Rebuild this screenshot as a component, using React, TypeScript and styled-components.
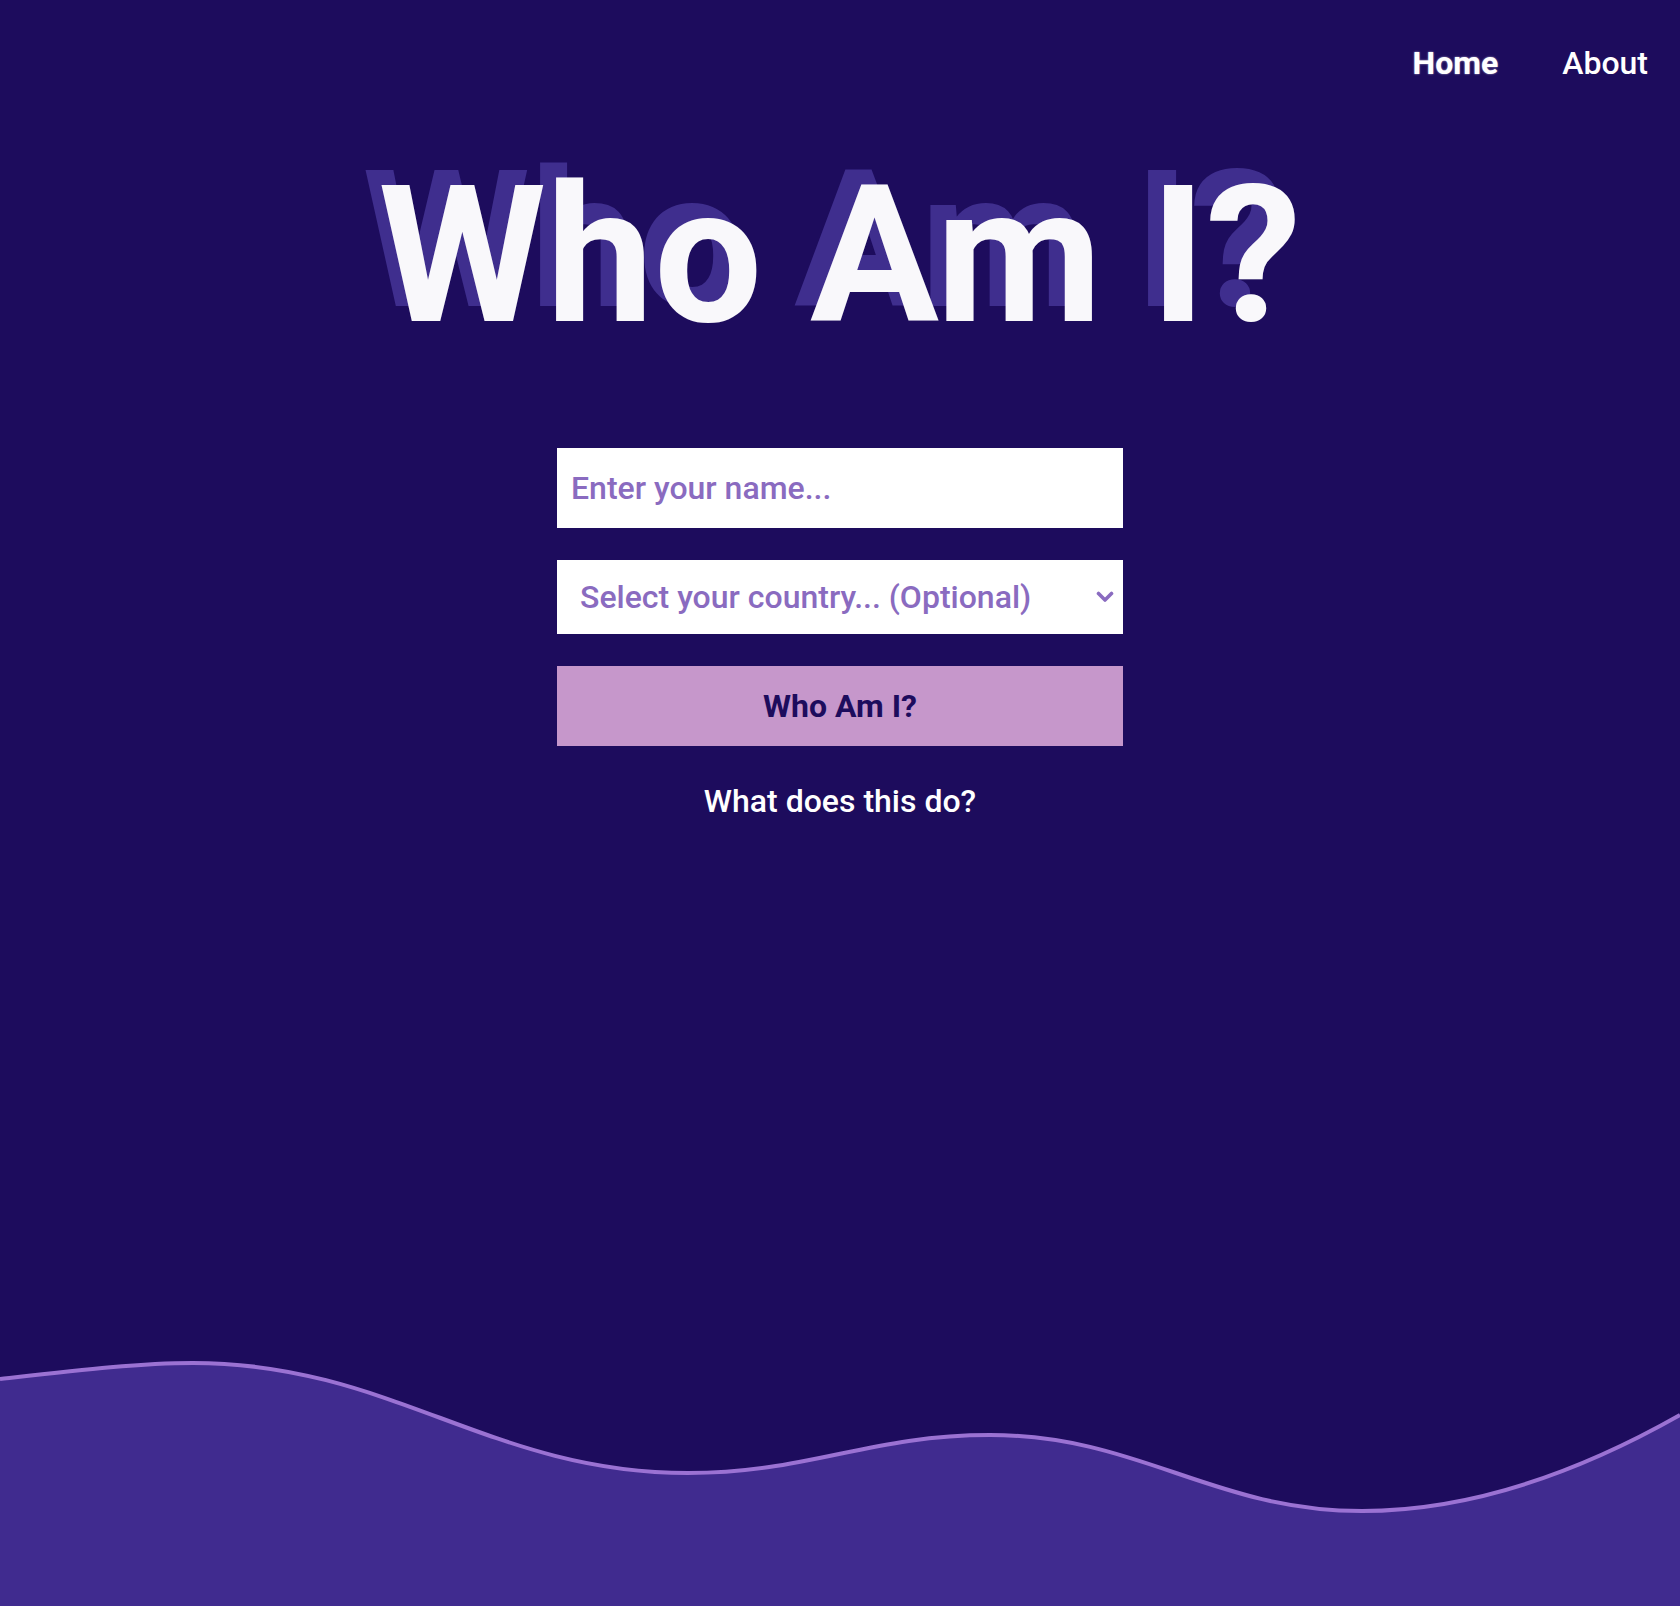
import React, { useState } from 'react';
import styled, { createGlobalStyle } from 'styled-components';

const GlobalStyle = createGlobalStyle`
    * {
        box-sizing: border-box;
    }
    body {
        margin: 0;
        background-color: #1d0c5d;
        font-family: Roboto, "Liberation Sans", Arial, sans-serif;
    }
`

const countries = ['Ireland', 'United Kingdom', 'United States', 'Canada', 'Australia', 'Germany', 'France'];

const App: React.FC = () => {
    const [name, setName] = useState('');
    const [country, setCountry] = useState('');

    return (
        <>
            <GlobalStyle />
            <Page>
                <Nav>
                    <NavLink href="#" active>Home</NavLink>
                    <NavLink href="#">About</NavLink>
                </Nav>
                <Main>
                    <Title>Who Am I?</Title>
                    <Form onSubmit={(e) => e.preventDefault()}>
                        <NameInput
                            type="text"
                            placeholder="Enter your name..."
                            value={name}
                            onChange={(e) => setName(e.target.value)}
                        />
                        <SelectWrap>
                            <CountrySelect value={country} onChange={(e) => setCountry(e.target.value)}>
                                <option value="">Select your country... (Optional)</option>
                                {countries.map((c) => (
                                    <option key={c} value={c}>{c}</option>
                                ))}
                            </CountrySelect>
                            <Chevron width="18" height="12" viewBox="0 0 18 12">
                                <polyline points="2.5,2.5 9,9 15.5,2.5" fill="none" stroke="#8a6bc0" strokeWidth="3.6" strokeLinecap="round" strokeLinejoin="round" />
                            </Chevron>
                        </SelectWrap>
                        <SubmitButton type="submit">Who Am I?</SubmitButton>
                    </Form>
                    <HelpLink href="#">What does this do?</HelpLink>
                </Main>
                <Wave viewBox="0 0 1680 250" preserveAspectRatio="none">
                    <path
                        d="M0,23 C80,14 140,7 193,7 C391,7 490,117 688,117 C809,117 869,79 990,79 C1139,79 1213,155 1362,155 C1480,155 1590,110 1680,59 L1680,250 L0,250 Z"
                        fill="#402b8f"
                    />
                    <path
                        d="M0,23 C80,14 140,7 193,7 C391,7 490,117 688,117 C809,117 869,79 990,79 C1139,79 1213,155 1362,155 C1480,155 1590,110 1680,59"
                        fill="none"
                        stroke="#9b72d3"
                        strokeWidth="4"
                    />
                </Wave>
            </Page>
        </>
    );
};

export default App;

const Page = styled.div`
    min-height: 100vh;
    display: flex;
    flex-direction: column;
    background-color: #1d0c5d;
`
const Nav = styled.nav`
    display: flex;
    justify-content: flex-end;
    gap: 64px;
    height: 80px;
    padding: 44px 32px 0 0;
`
const NavLink = styled.a<{ active?: boolean }>`
    color: #ffffff;
    text-decoration: none;
    font-size: 32px;
    line-height: normal;
    font-weight: ${(p) => (p.active ? 700 : 500)};
    text-shadow: ${(p) => (p.active ? '0 0 2px rgba(255, 255, 255, 0.7)' : 'none')};
`
const Main = styled.main`
    flex: 1;
    display: flex;
    flex-direction: column;
    align-items: center;
`
const Title = styled.h1`
    margin: 80px 0 0 0;
    font-family: Roboto, "Liberation Sans", Arial, sans-serif;
    font-size: 192px;
    line-height: 1;
    font-weight: 700;
    color: #f9f8fb;
    text-shadow: -16px -15px 0 #3f2e8e;
`
const Form = styled.form`
    width: 566px;
    margin-top: 96px;
    display: flex;
    flex-direction: column;
    gap: 32px;
`
const NameInput = styled.input`
    width: 100%;
    height: 80px;
    border: none;
    outline: none;
    padding: 0 14px;
    font-family: Roboto, sans-serif;
    font-size: 32px;
    font-weight: 500;
    color: #1d0c5d;
    background: #ffffff;
    &::placeholder {
        color: #8a6bc0;
    }
`
const SelectWrap = styled.div`
    position: relative;
    width: 100%;
`
const CountrySelect = styled.select`
    width: 100%;
    height: 74px;
    border: none;
    outline: none;
    border-radius: 0;
    appearance: none;
    -webkit-appearance: none;
    padding: 0 40px 0 23px;
    font-family: Roboto, sans-serif;
    font-size: 32px;
    font-weight: 500;
    color: #8a6bc0;
    background: #ffffff;
    cursor: pointer;
`
const Chevron = styled.svg`
    position: absolute;
    right: 9px;
    top: 31px;
    pointer-events: none;
`
const SubmitButton = styled.button`
    width: 100%;
    height: 80px;
    border: none;
    background-color: #c697cb;
    color: #1d0c5d;
    font-family: Roboto, sans-serif;
    font-size: 32px;
    font-weight: 700;
    cursor: pointer;
`
const HelpLink = styled.a`
    margin-top: 36px;
    color: #ffffff;
    text-decoration: none;
    font-size: 32px;
    font-weight: 500;
    line-height: normal;
`
const Wave = styled.svg`
    display: block;
    width: 100%;
    height: 250px;
`
